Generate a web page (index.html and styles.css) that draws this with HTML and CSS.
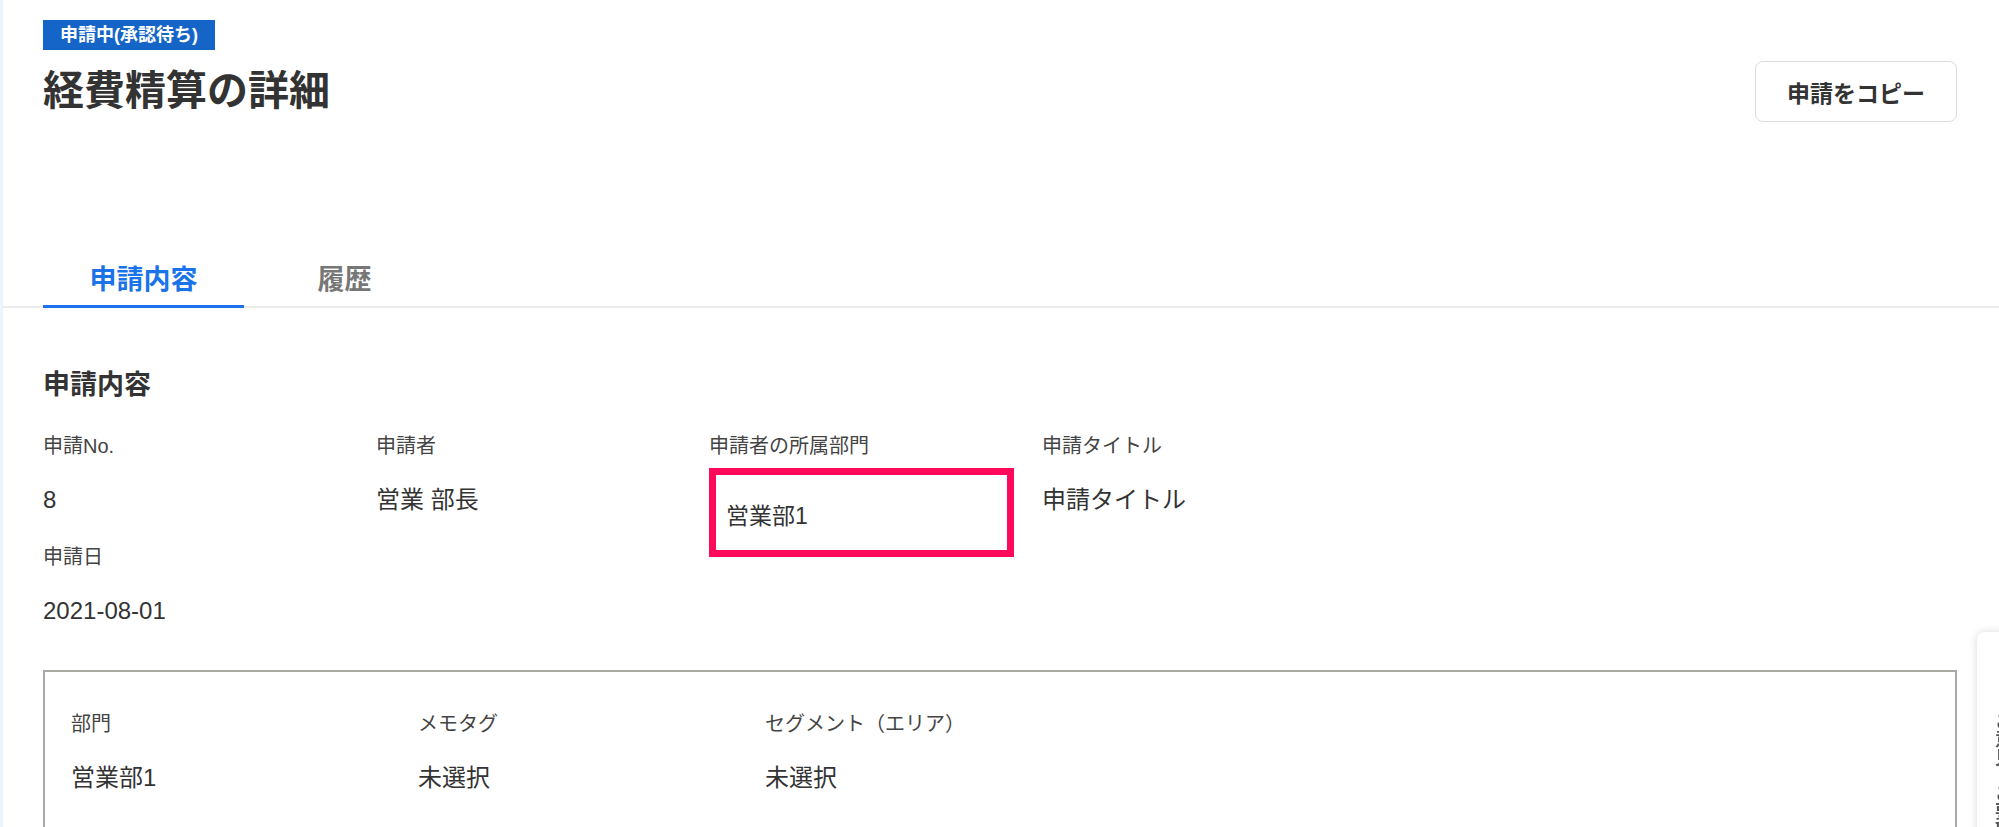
FILE: index.html
```html
<!DOCTYPE html>
<html lang="ja">
<head>
<meta charset="UTF-8">
<meta name="viewport" content="width=device-width, initial-scale=1.0">
<title>経費精算の詳細</title>
<link rel="stylesheet" href="styles.css">
</head>
<body>
  <div class="page">
    <div class="rail"></div>
    <main class="main">
      <header class="page-head">
        <div class="head-text">
          <span class="status">申請中(承認待ち)</span>
          <h1 class="title">経費精算の詳細</h1>
        </div>
        <button class="copy-btn">申請をコピー</button>
      </header>

      <nav class="tabs">
        <a href="#" class="tab active">申請内容</a>
        <a href="#" class="tab">履歴</a>
      </nav>

      <section class="detail">
        <h2 class="section-title">申請内容</h2>
        <div class="fields">
          <div class="field">
            <div class="label">申請No.</div>
            <div class="value">8</div>
          </div>
          <div class="field">
            <div class="label">申請者</div>
            <div class="value">営業 部長</div>
          </div>
          <div class="field">
            <div class="label">申請者の所属部門</div>
            <!-- annotated value -->
            <div class="value marked">営業部1</div>
          </div>
          <div class="field">
            <div class="label">申請タイトル</div>
            <div class="value">申請タイトル</div>
          </div>
          <div class="field">
            <div class="label">申請日</div>
            <div class="value">2021-08-01</div>
          </div>
        </div>

        <div class="breakdown">
          <div class="fields fields-wide">
            <div class="field">
              <div class="label">部門</div>
              <div class="value">営業部1</div>
            </div>
            <div class="field">
              <div class="label">メモタグ</div>
              <div class="value">未選択</div>
            </div>
            <div class="field">
              <div class="label">セグメント（エリア）</div>
              <div class="value">未選択</div>
            </div>
          </div>
        </div>
      </section>
    </main>
  </div>
  <aside class="side-tab">ご意見・ご要望</aside>
</body>
</html>
```

FILE: styles.css
```css
html, body {
  margin: 0;
  padding: 0;
  background: #fff;
  font-family: 'Liberation Sans', 'Noto Sans CJK JP', sans-serif;
  color: #333;
}
.page {
  display: flex;
  min-height: 100vh;
}
.rail {
  width: 3px;
  flex: 0 0 3px;
  background: #edf4fc;
}
.main {
  flex: 1 1 auto;
  min-width: 0;
}
/* HEADER */
.page-head {
  display: flex;
  justify-content: space-between;
  align-items: flex-start;
  padding: 20px 42px 0 40px;
}
.head-text {
  display: flex;
  flex-direction: column;
  align-items: flex-start;
}
.status {
  display: inline-block;
  background: #1565c8;
  color: #fff;
  font-size: 18px;
  font-weight: 700;
  line-height: 30px;
  padding: 0 17px;
}
.title {
  margin: 16px 0 0 0;
  font-size: 41px;
  font-weight: 700;
  line-height: 50px;
  color: #333;
}
.copy-btn {
  margin-top: 41px;
  width: 202px;
  height: 61px;
  background: #fff;
  border: 1px solid #dcdcdc;
  border-radius: 8px;
  font-family: 'Noto Sans CJK JP', sans-serif;
  font-size: 23px;
  font-weight: 700;
  color: #333;
  cursor: pointer;
}
/* TABS */
.tabs {
  display: flex;
  margin-top: 138px;
  padding-left: 40px;
  border-bottom: 2px solid #ececec;
}
.tab {
  width: 201px;
  text-align: center;
  font-size: 27px;
  font-weight: 700;
  line-height: 40px;
  padding-bottom: 5px;
  border-bottom: 3px solid transparent;
  margin-bottom: -2px;
  color: #777;
  text-decoration: none;
}
.tab.active {
  color: #1a73e8;
  border-bottom-color: #1a73e8;
}
/* DETAIL */
.detail {
  padding: 57px 42px 0 40px;
}
.section-title {
  margin: 0 0 26px 0;
  font-size: 27px;
  font-weight: 700;
  line-height: 40px;
  color: #333;
}
.fields {
  display: grid;
  grid-template-columns: repeat(4, 333px);
  row-gap: 25px;
}
.fields-wide {
  grid-template-columns: repeat(3, 347px);
}
.label {
  font-size: 20px;
  line-height: 30px;
  color: #444;
}
.value {
  margin-top: 22px;
  font-size: 24px;
  line-height: 34px;
  color: #333;
}
.value.marked {
  width: 271px;
  margin-top: 7px;
  margin-bottom: -40px;
  padding: 24px 10px 17px 10px;
  border: 7px solid #ff0a5a;
  font-size: 23px;
}
.breakdown {
  margin-top: 42px;
  border: 2px solid #a9a9a3;
  padding: 37px 26px 40px 26px;
}
/* FLOATING SIDE TAB */
.side-tab {
  position: fixed;
  top: 632px;
  right: -30px;
  width: 52px;
  height: 300px;
  padding: 80px 16px 0 18px;
  box-sizing: border-box;
  background: #fff;
  border-radius: 8px 0 0 8px;
  box-shadow: 0 0 8px rgba(0, 0, 0, 0.15);
  writing-mode: vertical-rl;
  font-family: 'Noto Sans CJK JP', sans-serif;
  font-size: 18px;
  line-height: 18px;
  font-weight: 700;
  color: #555;
}
```
